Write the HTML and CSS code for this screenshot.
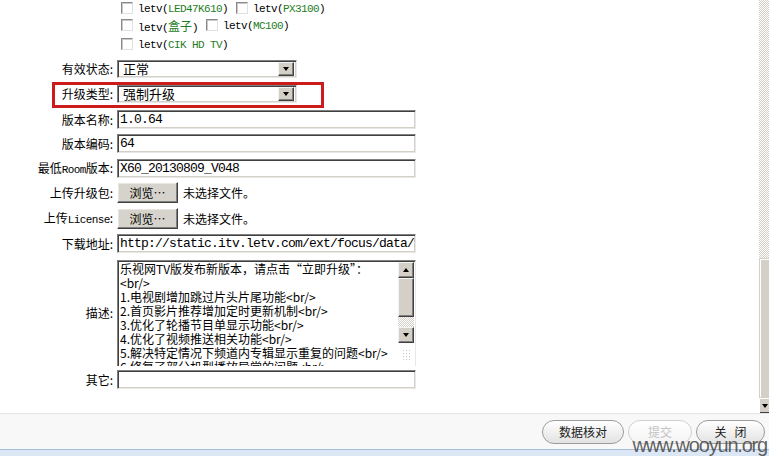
FILE: index.html
```html
<!DOCTYPE html>
<html lang="zh-CN">
<head>
<meta charset="utf-8">
<title>版本管理</title>
<link rel="stylesheet" href="styles.css">
</head>
<body>
<div class="frame">
  <div class="viewport">
    <div class="form">
      <div class="row r-cb1"><div class="line"><div class="lbl"></div><div class="val cbs">
        <span class="cb"></span><span class="opt">letv(<em>LED47K610</em>)</span>
        <span class="cb sp"></span><span class="opt">letv(<em>PX3100</em>)</span>
      </div></div></div>
      <div class="row r-cb"><div class="line"><div class="lbl"></div><div class="val cbs">
        <span class="cb"></span><span class="opt">letv(<em class="cjk">盒子</em>)</span>
        <span class="cb sp"></span><span class="opt">letv(<em>MC100</em>)</span>
      </div></div></div>
      <div class="row r-cb"><div class="line"><div class="lbl"></div><div class="val cbs">
        <span class="cb"></span><span class="opt">letv(<em>CIK HD TV</em>)</span>
      </div></div></div>
      <div class="row r-sel1"><div class="line"><div class="lbl">有效状态:</div><div class="val">
        <div class="select"><span class="sel-text">正常</span><span class="sel-btn"><i></i></span></div>
      </div></div></div>
      <div class="row r-sel2"><div class="line"><div class="lbl">升级类型:</div><div class="val">
        <div class="select"><span class="sel-text">强制升级</span><span class="sel-btn"><i></i></span></div>
      </div></div></div>
      <div class="row r-v1"><div class="line"><div class="lbl">版本名称:</div><div class="val"><div class="input">1.0.64</div></div></div></div>
      <div class="row r-v2"><div class="line"><div class="lbl">版本编码:</div><div class="val"><div class="input">64</div></div></div></div>
      <div class="row r-v3"><div class="line"><div class="lbl">最低<span class="mono">Room</span>版本:</div><div class="val"><div class="input">X60_20130809_V048</div></div></div></div>
      <div class="row r-up1"><div class="line"><div class="lbl">上传升级包:</div><div class="val"><span class="browse">浏览…</span><span class="nofile">未选择文件。</span></div></div></div>
      <div class="row r-up2"><div class="line"><div class="lbl">上传<span class="mono">License</span>:</div><div class="val"><span class="browse">浏览…</span><span class="nofile">未选择文件。</span></div></div></div>
      <div class="row r-dl"><div class="line"><div class="lbl">下载地址:</div><div class="val"><div class="input">http://static.itv.letv.com/ext/focus/data/1</div></div></div></div>
      <div class="row r-desc"><div class="line"><div class="lbl">描述:</div><div class="val">
        <div class="ta">
          <div class="ta-text">
            <div>乐视网TV版发布新版本，请点击“立即升级”：</div>
            <div>&lt;br/&gt;</div>
            <div>1.电视剧增加跳过片头片尾功能&lt;br/&gt;</div>
            <div>2.首页影片推荐增加定时更新机制&lt;br/&gt;</div>
            <div>3.优化了轮播节目单显示功能&lt;br/&gt;</div>
            <div>4.优化了视频推送相关功能&lt;br/&gt;</div>
            <div>5.解决特定情况下频道内专辑显示重复的问题&lt;br/&gt;</div>
            <div>6.修复了部分机型播放异常的问题&lt;br/&gt;</div>
          </div>
          <div class="ta-sb">
            <span class="sb-btn up"><i></i></span>
            <span class="sb-thumb"></span>
            <span class="sb-track"></span>
            <span class="sb-btn down"><i></i></span>
            <span class="grip"></span>
          </div>
        </div>
      </div></div></div>
      <div class="row r-other"><div class="line"><div class="lbl">其它:</div><div class="val"><div class="input"></div></div></div></div>
      <div class="mark"></div>
    </div>
    <div class="vscroll">
      <span class="vs-track"></span>
      <span class="vs-thumb"></span>
      <span class="vs-btn"><i></i></span>
    </div>
  </div>
  <div class="footer">
    <div class="bar">
      <span class="pill w82">数据核对</span>
      <span class="pill w64 disabled">提交</span>
      <span class="pill w69">关&nbsp;&nbsp;&nbsp;闭</span>
    </div>
    <div class="strip"></div>
    <div class="watermark">www.wooyun.org</div>
  </div>
</div>
</body>
</html>
```

FILE: styles.css
```css
* { box-sizing: border-box; }
html, body { margin: 0; padding: 0; background: #fff; }
body {
  width: 769px; height: 456px; overflow: hidden;
  font: 12px "Noto Sans CJK SC", "Liberation Sans", sans-serif;
  color: #000;
}
.frame { display: flex; flex-direction: column; height: 456px; position: relative; }
.viewport { display: flex; height: 413px; overflow: hidden; flex: none; }
.form { flex: 1; position: relative; display: flex; flex-direction: column; }

/* rows: fixed heights, control offset by padding-top */
.row { flex: none; }
.line { display: flex; align-items: center; }
.r-cb1 { height: 17px; padding-top: 1px; }
.r-cb { height: 19px; padding-top: 1px; }
.r-cb1 .line, .r-cb .line { height: 15px; }
.r-sel1 { height: 26px; padding-top: 5px; }
.r-sel2 { height: 26px; padding-top: 4px; }
.r-v1 { height: 25px; padding-top: 3px; }
.r-v2 { height: 24px; padding-top: 2px; }
.r-v3 { height: 25px; padding-top: 3px; }
.r-up1 { height: 25px; padding-top: 1px; }
.r-up2 { height: 25px; padding-top: 2px; }
.r-dl { height: 26px; padding-top: 3px; }
.r-desc { height: 111px; padding-top: 3px; }
.r-other { height: 23px; padding-top: 2px; }

.lbl { width: 113px; flex: none; text-align: right; white-space: nowrap; line-height: 14px; }
.mono { font-family: "Liberation Mono", monospace; font-size: 11px; letter-spacing: -0.6px; }
.val { margin-left: 4px; display: flex; align-items: center; }

/* checkboxes */
.cbs { padding-left: 4px; }
.cb {
  width: 12px; height: 12px; background: #fff; flex: none;
  border-top: 1px solid #8a8a8a; border-left: 1px solid #8a8a8a;
  border-right: 1px solid #e0e0e0; border-bottom: 1px solid #e0e0e0;
  box-shadow: inset 1px 1px 0 #c8c8c8;
  margin-right: 5px; margin-top: -1px;
}
.cb.sp { margin-left: 8px; }
.opt {
  font-family: "Liberation Mono", monospace; font-size: 11px; letter-spacing: -0.6px;
  white-space: nowrap;
}
.opt em { font-style: normal; color: #1e7d1e; }
.opt em.cjk { font-family: "Noto Sans CJK SC", sans-serif; font-size: 12px; letter-spacing: 0; }

/* select */
.select {
  width: 180px; height: 18px; display: flex; align-items: center; background: #fff;
  border-top: 1px solid #808080; border-left: 1px solid #808080;
  border-right: 1px solid #e8e8e8; border-bottom: 1px solid #e8e8e8;
  box-shadow: inset 1px 1px 0 #404040, inset -1px -1px 0 #d4d0c8;
  padding: 2px 2px 2px 5px;
}
.sel-text { flex: 1; font-size: 13px; line-height: 14px; }
.sel-btn {
  width: 16px; height: 14px; background: #d4d0c8; flex: none;
  border-top: 1px solid #f4f4f4; border-left: 1px solid #f4f4f4;
  border-right: 1px solid #404040; border-bottom: 1px solid #404040;
  box-shadow: inset -1px -1px 0 #808080;
  display: flex; align-items: center; justify-content: center;
}
.sel-btn i, .sb-btn i, .vs-btn i {
  display: block; width: 0; height: 0;
  border-left: 3.5px solid transparent; border-right: 3.5px solid transparent;
  border-top: 4px solid #000;
}

/* inputs */
.input {
  width: 299px; height: 19px; background: #fff;
  border-top: 1px solid #808080; border-left: 1px solid #808080;
  border-right: 1px solid #e8e8e8; border-bottom: 1px solid #e8e8e8;
  box-shadow: inset 1px 1px 0 #404040, inset -1px -1px 0 #d4d0c8;
  padding: 1px 0 0 2px; overflow: hidden; white-space: nowrap;
  font-family: "Liberation Mono", "Noto Sans CJK SC", monospace; font-size: 13px;
  letter-spacing: -0.8px; line-height: 16px;
}

/* file */
.browse {
  width: 61px; height: 21px; background: #d6d3cc; flex: none;
  border-top: 1px solid #fff; border-left: 1px solid #fff;
  border-right: 1px solid #404040; border-bottom: 1px solid #404040;
  box-shadow: inset -1px -1px 0 #808080, inset 1px 1px 0 #e8e6e0;
  display: flex; align-items: center; justify-content: center; font-size: 12px;
}
.nofile { margin-left: 5px; }

/* textarea */
.ta {
  width: 299px; height: 106px; display: flex; background: #fff; overflow: hidden;
  border-top: 1px solid #808080; border-left: 1px solid #808080;
  border-right: 1px solid #e8e8e8;
  box-shadow: inset 1px 1px 0 #404040;
  padding: 1px 0 0 1px;
}
.ta-text {
  flex: 1; overflow: hidden; white-space: nowrap; padding: 0 0 0 1px;
  line-height: 14px; font-size: 12px;
}
.ta-sb { width: 16px; flex: none; display: flex; flex-direction: column; margin-right: 1px; }
.sb-btn {
  height: 16px; background: #d4d0c8; display: flex; align-items: center; justify-content: center;
  border-top: 1px solid #f4f4f4; border-left: 1px solid #f4f4f4;
  border-right: 1px solid #404040; border-bottom: 1px solid #404040;
  box-shadow: inset -1px -1px 0 #808080;
}
.sb-btn.up i { border-top: 0; border-bottom: 4px solid #000; }
.sb-thumb {
  height: 39px; background: #d4d0c8;
  border-top: 1px solid #f4f4f4; border-left: 1px solid #f4f4f4;
  border-right: 1px solid #404040; border-bottom: 1px solid #404040;
  box-shadow: inset -1px -1px 0 #808080;
}
.sb-track {
  height: 10px;
  background: repeating-conic-gradient(#fff 0 25%, #d4d0c8 0 50%) 0 0 / 2px 2px;
}
.grip {
  height: 12px; margin: 6px 0 0 4px; width: 10px;
  background: radial-gradient(circle, #c8c8c8 0.7px, transparent 0.9px) 0 0 / 3px 3px;
}

/* annotation */
.mark {
  position: absolute; left: 52px; top: 82px; width: 272px; height: 26px;
  border: 3px solid #cc1b1b;
}

/* page scrollbar */
.vscroll { width: 10px; flex: none; display: flex; flex-direction: column; }
.vs-track {
  height: 258px;
  background: repeating-conic-gradient(#fff 0 25%, #d4d0c8 0 50%) 0 0 / 2px 2px;
}
.vs-thumb {
  height: 139px; background: #d4d0c8;
  border-top: 1px solid #d4d0c8; border-left: 1px solid #d4d0c8;
  box-shadow: inset 1px 1px 0 #fff;
}
.vs-btn {
  height: 16px; background: #d4d0c8; display: flex; align-items: center; justify-content: flex-end;
  padding-right: 1px;
  border-top: 1px solid #d4d0c8; box-shadow: inset 1px 1px 0 #fff, inset 0 -1px 0 #404040;
}

/* footer */
.footer { flex: 1; display: flex; flex-direction: column; border-top: 1px solid #e4e4e4; position: relative; }
.bar {
  flex: 1; background: #f8f8f8; display: flex; align-items: center; justify-content: flex-end;
  padding-right: 4px; gap: 4px;
}
.strip { height: 7px; flex: none; background: #dce7f5; border-top: 1px solid #a6bedc; }
.pill {
  height: 24px; border-radius: 12px; border: 1px solid #9c9c9c;
  background: linear-gradient(#ffffff, #f2f2f2 45%, #e2e2e2);
  display: flex; align-items: center; justify-content: center; font-size: 12px; color: #222;
}
.pill.disabled { color: #c4c4c4; border-color: #d0d0d0; background: linear-gradient(#fff, #f4f4f4); }
.w82 { width: 82px; } .w64 { width: 64px; } .w69 { width: 69px; }
.watermark {
  position: absolute; right: 2px; bottom: 1px;
  font: 20px "Liberation Sans", Arial, sans-serif; color: rgba(70, 70, 70, 0.85);
  letter-spacing: -1.2px; line-height: 20px;
}
```
